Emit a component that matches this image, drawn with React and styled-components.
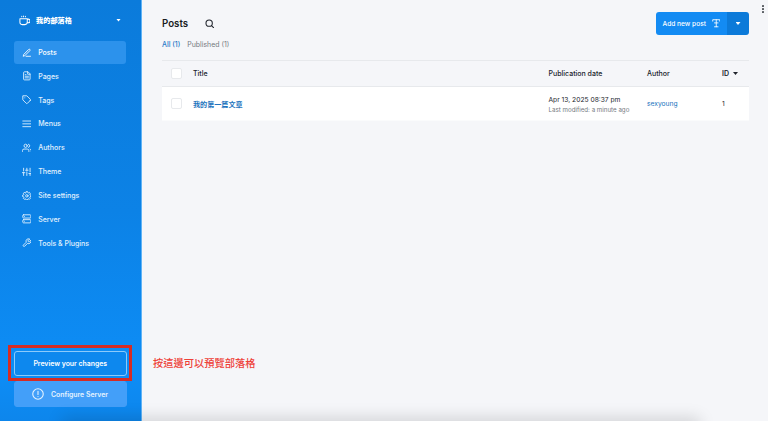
import React from "react";
import styled, { createGlobalStyle } from "styled-components";

const Global = createGlobalStyle`
  * { box-sizing: border-box; }
  body { margin: 0; font-family: Inter, "Noto Sans CJK TC", sans-serif; }
  button { font-family: inherit; border: 0; margin: 0; padding: 0; }
`;

const Shell = styled.div`
  position: relative;
  display: flex;
  width: 768px;
  height: 421px;
  overflow: hidden;
  background: #f5f6f9;
  color: #20242c;
`;

const Sidebar = styled.aside`
  position: relative;
  display: flex;
  flex-direction: column;
  width: 142px;
  height: 421px;
  flex: none;
  padding: 0 15px 14px 14px;
  background: linear-gradient(#0b7bdb, #0c82e6 50%, #0d8df6 88%, #0d86ec);
  border-right: 1px solid #5fb3f6;
  color: #e6f3fe;
`;

const SiteName = styled.div`
  display: flex;
  align-items: center;
  height: 41px;
  padding: 0 5px 1px;
  font-size: 7.2px;
  font-weight: 700;
  color: #fff;
  & > b { flex: 1; margin-left: 6px; }
`;

const Nav = styled.nav`
  display: flex;
  flex-direction: column;
  gap: 0.82px;
`;

const NavItem = styled.a`
  display: flex;
  align-items: center;
  gap: 6.8px;
  height: 23px;
  padding-left: 7.7px;
  border-radius: 3px;
  font-size: 7px;
  font-weight: 500;
  background: ${(p) => (p.$active ? "#2c92ec" : "transparent")};
  color: ${(p) => (p.$active ? "#fff" : "#e2f1fe")};
`;

const Icon = styled.svg`
  display: block;
  flex: none;
  fill: none;
  stroke: currentColor;
  stroke-width: ${(p) => p.$weight || 2.2};
  stroke-linecap: round;
  stroke-linejoin: round;
`;

const Caret = styled.span`
  flex: none;
  width: 5px;
  height: 3px;
  background: currentColor;
  clip-path: polygon(0 0, 100% 0, 50% 100%);
`;

const Actions = styled.div`
  position: relative;
  display: flex;
  flex-direction: column;
  gap: 5px;
  width: 112.5px;
  margin-top: auto;
`;

const SideButton = styled.button`
  display: flex;
  align-items: center;
  justify-content: center;
  gap: 6.5px;
  height: ${(p) => (p.$outlined ? 25.5 : 26)}px;
  border: 1px solid ${(p) => (p.$outlined ? "#8ccafa" : "#459ff8")};
  border-radius: 3px;
  background: ${(p) => (p.$outlined ? "#0d88ee" : "#439ff9")};
  color: ${(p) => (p.$outlined ? "#fff" : "#e5f3ff")};
  font-size: 6.9px;
  font-weight: 600;
`;

const Highlight = styled.div`
  position: absolute;
  left: -6px;
  top: -6px;
  width: 124px;
  height: 36px;
  border: 3px solid #d62c24;
`;

const Note = styled.p`
  position: absolute;
  left: 153px;
  top: 355px;
  margin: 0;
  font-family: "Noto Sans CJK TC", sans-serif;
  font-size: 10.25px;
  line-height: 16px;
  font-weight: 500;
  color: #ee4138;
  white-space: nowrap;
`;

const Main = styled.main`
  display: flex;
  flex-direction: column;
  flex: 1;
  padding: 12px 19px 0 20px;
`;

const Header = styled.header`
  display: flex;
  align-items: center;
  height: 23px;
`;

const Title = styled.h1`
  margin: 0 17px 0 0;
  font-size: 9.7px;
  font-weight: 600;
  color: #181b22;
`;

const SplitButton = styled.div`
  display: flex;
  width: 93px;
  height: 23px;
  margin-left: auto;
  border-radius: 3px;
  overflow: hidden;
`;

const AddButton = styled.button`
  display: flex;
  align-items: center;
  justify-content: center;
  gap: 6px;
  width: 71px;
  background: #138bf3;
  color: #fff;
  font-size: 6.6px;
  font-weight: 500;
`;

const DropButton = styled.button`
  display: flex;
  align-items: center;
  justify-content: center;
  flex: 1;
  background: #0c7ad9;
  color: #fff;
`;

const Filters = styled.div`
  display: flex;
  gap: 7px;
  margin-top: 4px;
  height: 10px;
  font-size: 6.95px;
  line-height: 11px;
`;

const Filter = styled.a`
  color: ${(p) => (p.$active ? "#2779c7" : "#747980")};
  font-weight: ${(p) => (p.$active ? 500 : 400)};
`;

const Table = styled.section`
  margin-top: 11px;
  border-top: 1px solid #e7e9ec;
`;

const Row = styled.div`
  display: grid;
  grid-template-columns: 31px 355.5px 98.5px 75px 1fr;
  align-items: center;
  height: ${(p) => (p.$head ? 26 : 34)}px;
  background: ${(p) => (p.$head ? "transparent" : "#fff")};
  border-bottom: 1px solid ${(p) => (p.$head ? "#e7e9ec" : "#fafbfc")};
  font-size: ${(p) => (p.$head ? 7 : 6.7)}px;
  font-weight: ${(p) => (p.$head ? 500 : 400)};
`;

const Checkbox = styled.span`
  width: 10.5px;
  height: 10.5px;
  margin-left: 9px;
  border: 1px solid #e7e9ec;
  border-radius: 2px;
  background: #fff;
`;

const Link = styled.a`
  color: #2173bd;
  font-size: ${(p) => (p.$bold ? 7.1 : 6.7)}px;
  font-weight: ${(p) => (p.$bold ? 700 : 400)};
`;

const DateCell = styled.div`
  padding-top: 2px;
  line-height: 10px;
  & small { display: block; font-size: 6.2px; line-height: 9px; color: #747980; }
`;

const SortHead = styled.span`
  display: flex;
  align-items: center;
  gap: 4px;
  font-weight: 600;
`;

const Menu = styled.div`
  position: absolute;
  right: 4px;
  top: 5px;
  display: flex;
  flex-direction: column;
  gap: 1.5px;
  & i { width: 1.7px; height: 1.7px; border-radius: 50%; background: #50545a; }
`;

const BottomShade = styled.div`
  position: absolute;
  left: 66px;
  bottom: -9px;
  width: 630px;
  height: 8px;
  box-shadow: 0 0 16px 4px rgba(0, 0, 0, 0.15);
`;

const icons = {
  Posts: <><path d="M10 20.5h11" /><path d="M16.5 3.5a2.1 2.1 0 0 1 3 3L6.5 19.5 3 20.5l1-3.5z" /></>,
  Pages: <><path d="M14 2H6a2 2 0 0 0-2 2v16a2 2 0 0 0 2 2h12a2 2 0 0 0 2-2V8z" /><path d="M14 2v6h6M8 9h2M8 13h8M8 17h8" /></>,
  Tags: <><path d="m20.6 13.4-7.2 7.2a2 2 0 0 1-2.8 0L2 12V2h10l8.6 8.6a2 2 0 0 1 0 2.8z" /><path d="M7 7h.01" /></>,
  Menus: <path d="M2 5h20M2 12h20M2 19h20" />,
  Authors: <><circle cx="9" cy="7" r="4" /><path d="M1 21v-2a4 4 0 0 1 4-4h8a4 4 0 0 1 4 4v2M16 3.1a4 4 0 0 1 0 7.8M23 21v-2a4 4 0 0 0-3-3.9" /></>,
  Theme: <path d="M4 21v-7M4 10V3M12 21v-9M12 8V3M20 21v-5M20 12V3M1 14h6M9 8h6M17 16h6" />,
  "Site settings": <><circle cx="12" cy="12" r="3" /><path d="M9.5 4.2 10.3 1.5h3.4l.8 2.7 1.4.6 2.5-1.4 2.2 2.2-1.4 2.5.6 1.4 2.7.8v3.4l-2.7.8-.6 1.4 1.4 2.5-2.2 2.2-2.5-1.4-1.4.6-.8 2.7h-3.4l-.8-2.7-1.4-.6-2.5 1.4-2.2-2.2 1.4-2.5-.6-1.4-2.7-.8v-3.4l2.7-.8.6-1.4-1.4-2.5 2.2-2.2 2.5 1.4z" /></>,
  Server: <><rect x="2" y="2" width="20" height="8" rx="2" /><rect x="2" y="14" width="20" height="8" rx="2" /><path d="M6 6h.01M6 18h.01" /></>,
  "Tools & Plugins": <path d="M14.7 6.3a1 1 0 0 0 0 1.4l1.6 1.6a1 1 0 0 0 1.4 0l3.8-3.8a6 6 0 0 1-8 8l-6.9 6.9a2.1 2.1 0 0 1-3-3l6.9-6.9a6 6 0 0 1 8-8z" />,
};

export default function App() {
  return (
    <>
      <Global />
      <Shell>
        <Sidebar>
          <SiteName>
            <Icon width="11" height="11" viewBox="0 0 24 24">
              <path d="M2 8h16v8a5 5 0 0 1-5 5H7a5 5 0 0 1-5-5zM18 9h2a3 3 0 0 1 0 8h-2M6 3v1M10 2v2M14 3v1" />
            </Icon>
            <b>我的部落格</b>
            <Caret />
          </SiteName>
          <Nav>
            {Object.entries(icons).map(([label, drawing]) => (
              <NavItem key={label} $active={label === "Posts"}>
                <Icon width="9.7" height="9.7" viewBox="0 0 24 24">{drawing}</Icon>
                {label}
              </NavItem>
            ))}
          </Nav>
          <Actions>
            <SideButton $outlined>Preview your changes</SideButton>
            <SideButton>
              <Icon width="12" height="12" viewBox="0 0 24 24">
                <circle cx="12" cy="12" r="10.5" /><path d="M12 6.5V13M12 17h.01" />
              </Icon>
              Configure Server
            </SideButton>
            <Highlight />
          </Actions>
        </Sidebar>
        <Main>
          <Header>
            <Title>Posts</Title>
            <Icon width="9.5" height="9.5" viewBox="0 0 24 24" $weight={2.7}>
              <circle cx="10.5" cy="10.5" r="8" /><path d="m16.5 16.5 5 5" />
            </Icon>
            <SplitButton>
              <AddButton>
                Add new post
                <Icon width="8.5" height="8.5" viewBox="0 0 24 24" $weight={2.4}>
                  <path d="M2 6V2h20v4M12 2v20M7 22h10M7 11h10" />
                </Icon>
              </AddButton>
              <DropButton><Caret /></DropButton>
            </SplitButton>
          </Header>
          <Filters>
            <Filter $active>All (1)</Filter>
            <Filter>Published (1)</Filter>
          </Filters>
          <Table>
            <Row $head>
              <Checkbox />
              <span>Title</span>
              <span>Publication date</span>
              <span>Author</span>
              <SortHead>ID <Caret /></SortHead>
            </Row>
            <Row>
              <Checkbox />
              <Link $bold>我的第一篇文章</Link>
              <DateCell>Apr 13, 2025 08:37 pm<small>Last modified: a minute ago</small></DateCell>
              <Link>sexyoung</Link>
              <span>1</span>
            </Row>
          </Table>
        </Main>
        <Note>按這邊可以預覽部落格</Note>
        <Menu><i /><i /><i /></Menu>
        <BottomShade />
      </Shell>
    </>
  );
}
